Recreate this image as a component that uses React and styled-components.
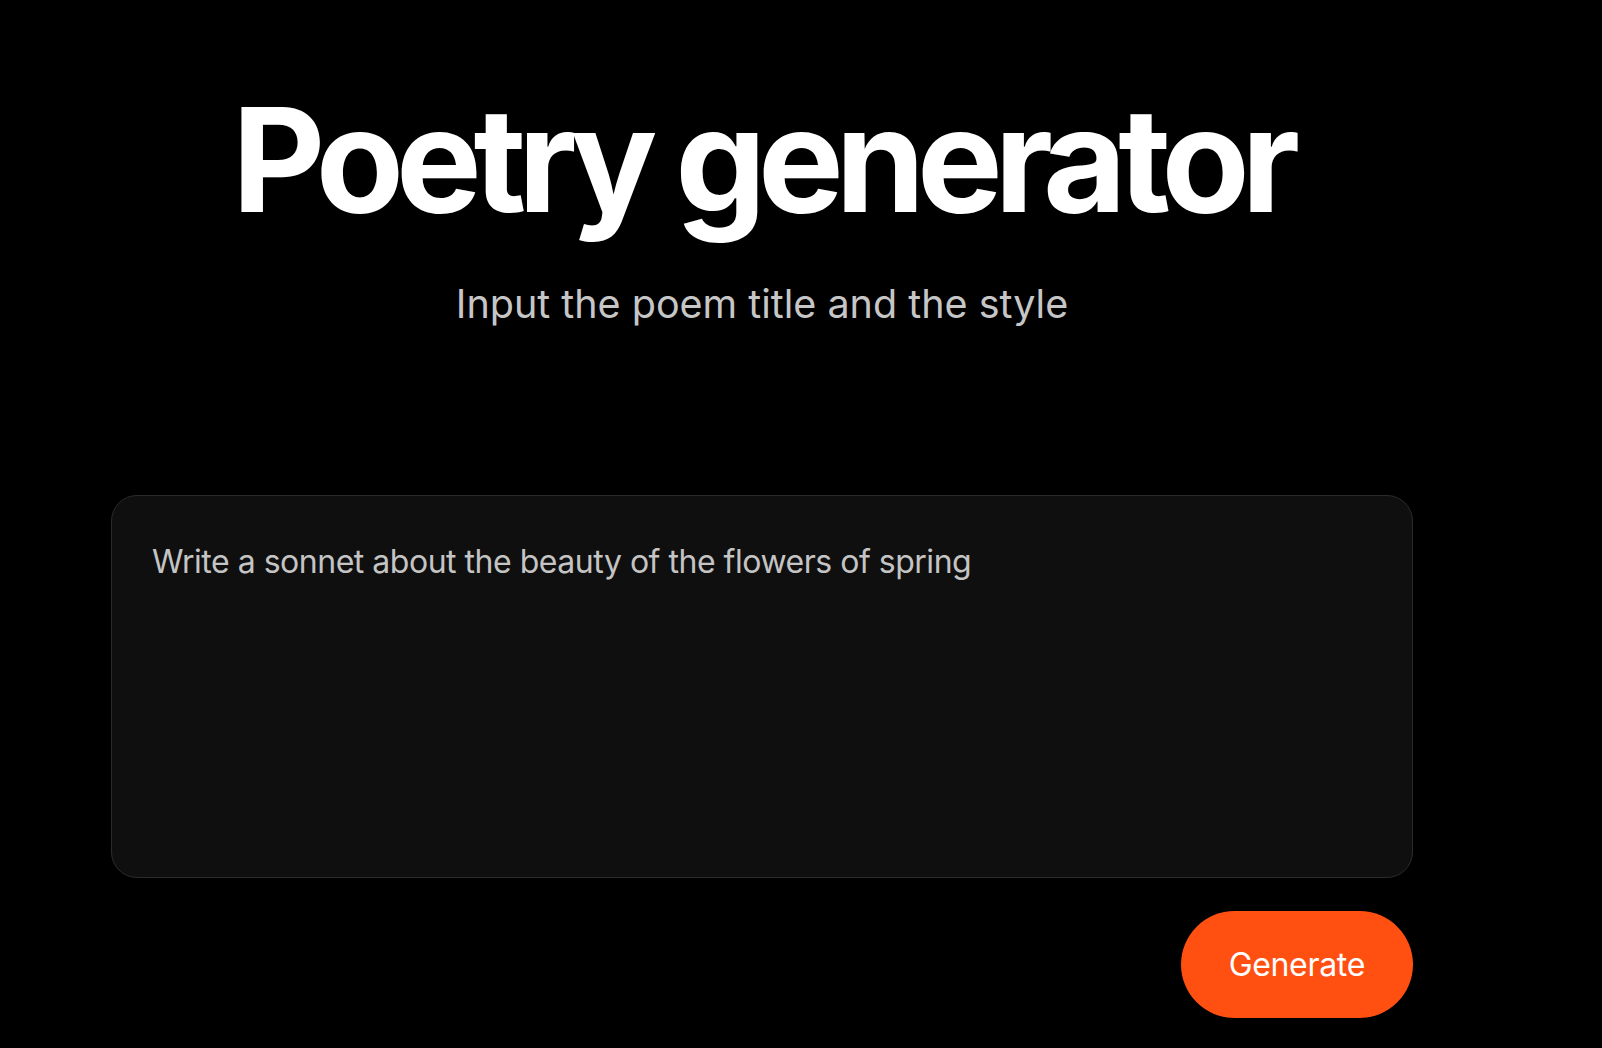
import React from 'react';
import styled, { createGlobalStyle } from 'styled-components';

const GlobalStyle = createGlobalStyle`
    html, body {
        margin: 0;
        padding: 0;
        background: #000;
    }
    body {
        font-family: Inter, "Noto Sans", sans-serif;
        color: #fff;
    }
`

export default function App() {
    return (
        <>
            <GlobalStyle />
            <Page>
                <Column>
                    <Title>Poetry generator</Title>
                    <Subtitle>Input the poem title and the style</Subtitle>
                    <PromptBox>
                        <PromptText>Write a sonnet about the beauty of the flowers of spring</PromptText>
                    </PromptBox>
                    <Actions>
                        <GenerateButton type="button">Generate</GenerateButton>
                    </Actions>
                </Column>
            </Page>
        </>
    );
}

const Page = styled.div`
    min-height: 100vh;
    background: #000;
    padding: 81px 0 0 111px;
    box-sizing: border-box;
`
const Column = styled.main`
    width: 1302px;
    display: flex;
    flex-direction: column;
    align-items: center;
`
const Title = styled.h1`
    margin: 0;
    font-size: 144px;
    line-height: 1.1;
    font-weight: 700;
    letter-spacing: -0.057em;
    white-space: nowrap;
    color: #fff;
`
const Subtitle = styled.p`
    margin: 42px 0 0;
    font-size: 39.5px;
    line-height: 1.2;
    font-weight: 400;
    letter-spacing: 0;
    color: #c6c6c6;
`
const PromptBox = styled.div`
    margin-top: 166px;
    align-self: stretch;
    height: 383px;
    box-sizing: border-box;
    background: #0f0f0f;
    border: 1.5px solid #2b2b2b;
    border-radius: 26px;
    padding: 47px 40px;
`
const PromptText = styled.div`
    font-size: 32px;
    line-height: 1.2;
    font-weight: 400;
    letter-spacing: -0.015em;
    color: #c4c4c4;
`
const Actions = styled.div`
    align-self: stretch;
    display: flex;
    justify-content: flex-end;
    margin-top: 33px;
`
const GenerateButton = styled.button`
    height: 107px;
    padding: 0 48px;
    border: none;
    border-radius: 54px;
    background: #ff5012;
    color: #fff;
    font-family: Inter, "Noto Sans", sans-serif;
    font-size: 32px;
    font-weight: 400;
    letter-spacing: -0.01em;
    cursor: pointer;
`
